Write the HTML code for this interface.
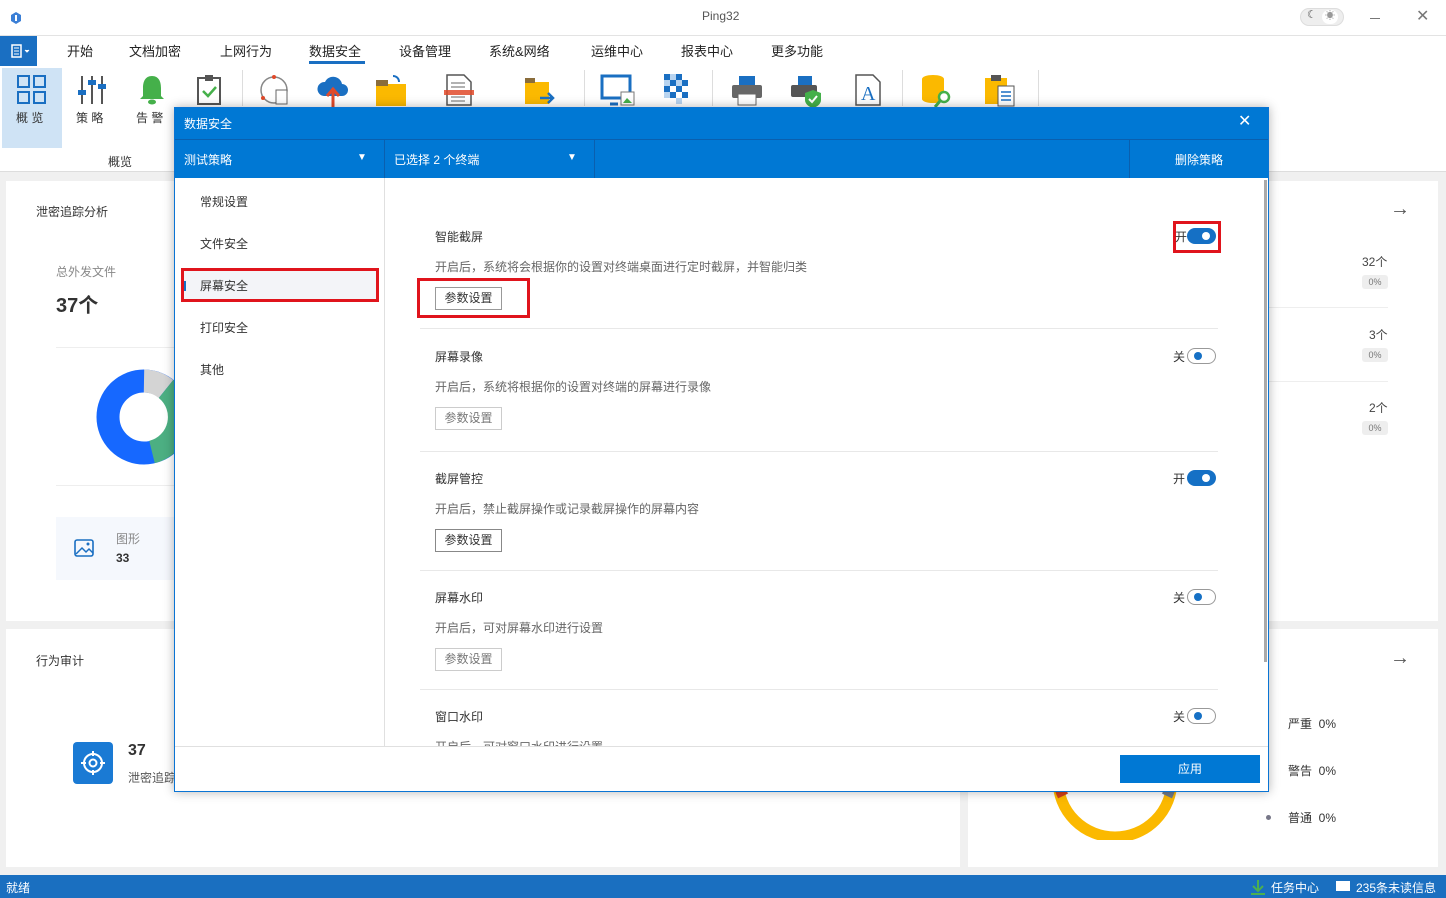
<!DOCTYPE html>
<html><head><meta charset="utf-8"><style>
*{margin:0;padding:0;box-sizing:border-box}
body{width:1446px;height:898px;position:relative;overflow:hidden;background:#f0f0f0;font-family:"Liberation Sans","Noto Sans CJK SC",sans-serif;font-size:12px;color:#333}
.a{position:absolute}
.t{position:absolute;white-space:nowrap;transform:translateY(-1px)}
.card{position:absolute;background:#fff}
.tab{position:absolute;top:41px;font-size:13px;color:#222}
.sep{position:absolute;top:70px;width:1px;height:36px;background:#ddd}
.sw{position:absolute;width:29px;height:16px;border-radius:8px}
.on{background:#1570c5}
.on:after{content:"";position:absolute;right:6px;top:4px;width:8px;height:8px;border-radius:50%;background:#fff}
.off{border:1px solid #999;background:#fff}
.off:after{content:"";position:absolute;left:6px;top:3px;width:8px;height:8px;border-radius:50%;background:#1570c5}
.btn{position:absolute;left:435px;width:67px;height:23px;border:1px solid #bbb;text-align:center;line-height:21px;font-size:12px;color:#333;background:#fff}
.hr{position:absolute;left:420px;width:798px;height:1px;background:#e8e8e8}
.nav{position:absolute;left:200px;font-size:12px;color:#333;transform:translateY(-1px)}
</style></head><body>
<div class="a" style="left:0;top:0;width:1446px;height:36px;background:#fff;border-bottom:1px solid #e3e3e3"></div>
<svg class="a" style="left:10px;top:11px" width="12" height="14"><path d="M6 1 L11 4 L11 10 L6 13 L1 10 L1 4Z" fill="#3b7fd6"/><path d="M6 4v6" stroke="#fff" stroke-width="2"/></svg>
<div class="t" style="left:702px;top:10px;font-size:12px;color:#555">Ping32</div>
<div class="a" style="left:1300px;top:8px;width:44px;height:18px;border-radius:9px;background:#eee;border:1px solid #ddd"></div>
<div class="t" style="left:1307px;top:9px;font-size:11px;color:#555">☾</div>
<div class="a" style="left:1322px;top:10px;width:16px;height:14px;background:#fff;border-radius:7px;font-size:10px;color:#999;text-align:center;line-height:14px">☀</div>
<div class="a" style="left:1370px;top:18px;width:10px;height:1px;background:#777"></div>
<div class="t" style="left:1416px;top:7px;font-size:16px;color:#777">✕</div>
<div class="a" style="left:0;top:36px;width:1446px;height:30px;background:#fff"></div>
<div class="a" style="left:0;top:36px;width:37px;height:30px;background:#1a6fc2"></div>
<svg class="a" style="left:11px;top:44px" width="20" height="14"><rect x="1" y="1" width="9" height="12" fill="none" stroke="#fff" stroke-width="1.5"/><path d="M3 4h5M3 7h5M3 10h5" stroke="#fff"/><path d="M14 6l2 2 2-2" fill="#fff" stroke="#fff"/></svg>
<div class="tab" style="left:67px">开始</div>
<div class="tab" style="left:129px">文档加密</div>
<div class="tab" style="left:220px">上网行为</div>
<div class="tab" style="left:309px">数据安全</div>
<div class="a" style="left:309px;top:61px;width:56px;height:3px;background:#1a6fc2"></div>
<div class="tab" style="left:399px">设备管理</div>
<div class="tab" style="left:489px">系统&amp;网络</div>
<div class="tab" style="left:591px">运维中心</div>
<div class="tab" style="left:681px">报表中心</div>
<div class="tab" style="left:771px">更多功能</div>
<div class="a" style="left:0;top:66px;width:1446px;height:106px;background:#fff;border-bottom:1px solid #ddd"></div>
<div class="a" style="left:2px;top:68px;width:60px;height:80px;background:#cfe3f5"></div>
<svg class="a" style="left:16px;top:74px" width="32" height="32"><g fill="none" stroke="#1a6fc2" stroke-width="2"><rect x="2" y="2" width="11" height="11"/><rect x="18" y="2" width="11" height="11"/><rect x="2" y="18" width="11" height="11"/><rect x="18" y="18" width="11" height="11"/></g></svg>
<div class="t" style="left:16px;top:110px">概 览</div>
<svg class="a" style="left:76px;top:74px" width="32" height="32"><path d="M6 2v28M16 2v28M26 2v28" stroke="#555" stroke-width="2"/><rect x="2" y="16" width="8" height="5" fill="#1a6fc2"/><rect x="12" y="6" width="8" height="5" fill="#1a6fc2"/><rect x="22" y="10" width="8" height="5" fill="#1a6fc2"/></svg>
<div class="t" style="left:76px;top:110px">策 略</div>
<svg class="a" style="left:136px;top:74px" width="32" height="32"><path d="M16 2c-7 0-9 6-9 12v8l-3 3h24l-3-3v-8c0-6-2-12-9-12z" fill="#45b04a"/><ellipse cx="16" cy="28" rx="4" ry="2.5" fill="#45b04a"/></svg>
<div class="t" style="left:136px;top:110px">告 警</div>
<svg class="a" style="left:196px;top:74px" width="28" height="32"><rect x="2" y="4" width="22" height="26" fill="none" stroke="#555" stroke-width="2"/><rect x="9" y="1" width="8" height="6" fill="#555"/><path d="M7 17l5 5 8-9" stroke="#45b04a" stroke-width="2.5" fill="none"/></svg>
<div class="sep" style="left:242px"></div>
<svg class="a" style="left:258px;top:74px" width="34" height="32"><circle cx="16" cy="16" r="13" fill="none" stroke="#888" stroke-width="1.5"/><circle cx="16" cy="3" r="2" fill="#e04a2a"/><circle cx="5" cy="24" r="2" fill="#e04a2a"/><rect x="18" y="16" width="11" height="14" fill="#fff" stroke="#666"/></svg>
<svg class="a" style="left:316px;top:74px" width="34" height="34"><path d="M8 22a7 7 0 0 1 1-14 9 9 0 0 1 17 2 6 6 0 0 1 0 12z" fill="#1a6fc2"/><path d="M17 34V16M11 22l6-7 6 7" stroke="#e04a2a" stroke-width="3" fill="none"/></svg>
<svg class="a" style="left:375px;top:74px" width="34" height="32"><rect x="1" y="10" width="30" height="22" fill="#fbb900"/><rect x="1" y="6" width="12" height="6" fill="#8a6d3b"/><path d="M24 8c0-4-3-6-6-6" stroke="#1a6fc2" stroke-width="2" fill="none"/></svg>
<svg class="a" style="left:444px;top:74px" width="30" height="32"><path d="M3 1h17l7 7v23H3z" fill="#fff" stroke="#555" stroke-width="1.5"/><path d="M7 9h14M7 13h14M7 23h14M7 27h14" stroke="#666"/><rect x="0" y="16" width="30" height="5" fill="#e04a2a" opacity=".85"/></svg>
<svg class="a" style="left:522px;top:74px" width="34" height="32"><rect x="3" y="8" width="24" height="22" fill="#fbb900"/><rect x="3" y="4" width="10" height="5" fill="#8a6d3b"/><path d="M18 24h12M26 19l5 5-5 5" stroke="#1a6fc2" stroke-width="2.5" fill="none"/></svg>
<div class="sep" style="left:584px"></div>
<svg class="a" style="left:600px;top:74px" width="36" height="32"><path d="M2 2h28v22H2z" fill="none" stroke="#1a6fc2" stroke-width="3"/><path d="M10 30h8" stroke="#1a6fc2" stroke-width="3"/><rect x="21" y="18" width="13" height="13" fill="#fff" stroke="#777"/><path d="M23 29l4-5 5 5z" fill="#45b04a"/></svg>
<svg class="a" style="left:664px;top:74px" width="28" height="30"><g fill="#1a6fc2"><rect x="0" y="0" width="6" height="6"/><rect x="12" y="0" width="6" height="6"/><rect x="6" y="6" width="6" height="6"/><rect x="18" y="6" width="6" height="6"/><rect x="0" y="12" width="6" height="6"/><rect x="12" y="12" width="6" height="6"/><rect x="6" y="18" width="6" height="6"/><rect x="18" y="18" width="6" height="6"/></g><g fill="#b8d4f0"><rect x="6" y="0" width="6" height="6"/><rect x="0" y="6" width="6" height="6"/><rect x="12" y="6" width="6" height="6"/><rect x="0" y="18" width="6" height="6"/><rect x="12" y="24" width="6" height="6"/></g></svg>
<div class="sep" style="left:712px"></div>
<svg class="a" style="left:730px;top:74px" width="34" height="32"><rect x="9" y="2" width="16" height="9" fill="#1a6fc2"/><rect x="2" y="11" width="30" height="13" rx="2" fill="#666"/><rect x="8" y="20" width="18" height="11" fill="#fff" stroke="#666"/></svg>
<svg class="a" style="left:789px;top:74px" width="36" height="34"><rect x="9" y="2" width="14" height="9" fill="#1a6fc2"/><rect x="2" y="11" width="26" height="12" rx="2" fill="#555"/><path d="M24 16l8 3v7c0 4-4 7-8 8-4-1-8-4-8-8v-7z" fill="#45b04a"/><path d="M20 25l3 3 5-6" stroke="#fff" stroke-width="2" fill="none"/></svg>
<svg class="a" style="left:854px;top:74px" width="28" height="32"><path d="M2 1h17l7 7v23H2z" fill="#fff" stroke="#555" stroke-width="1.5"/><text x="7" y="26" font-family="Liberation Serif" font-size="20" fill="#1a6fc2">A</text></svg>
<div class="sep" style="left:902px"></div>
<svg class="a" style="left:920px;top:74px" width="34" height="34"><ellipse cx="13" cy="5" rx="11" ry="4" fill="#fbb900"/><rect x="2" y="5" width="22" height="20" fill="#fbb900"/><ellipse cx="13" cy="25" rx="11" ry="4" fill="#fbb900"/><circle cx="24" cy="23" r="5" fill="#fff" stroke="#45b04a" stroke-width="2.5"/><path d="M20 27l-5 6" stroke="#45b04a" stroke-width="3"/></svg>
<svg class="a" style="left:984px;top:74px" width="34" height="34"><rect x="1" y="4" width="22" height="26" fill="#fbb900"/><rect x="7" y="1" width="10" height="6" fill="#555"/><rect x="14" y="12" width="16" height="20" fill="#fff" stroke="#555"/><path d="M17 18h10M17 22h10M17 26h10" stroke="#1a6fc2" stroke-width="1.5"/></svg>
<div class="sep" style="left:1038px"></div>
<div class="t" style="left:108px;top:154px;color:#333">概览</div>
<div class="card" style="left:6px;top:181px;width:954px;height:440px"></div>
<div class="card" style="left:968px;top:181px;width:470px;height:440px"></div>
<div class="card" style="left:6px;top:629px;width:954px;height:238px"></div>
<div class="card" style="left:968px;top:629px;width:470px;height:238px"></div>
<div class="t" style="left:36px;top:204px;color:#333">泄密追踪分析</div>
<div class="t" style="left:56px;top:264px;color:#888">总外发文件</div>
<div class="t" style="left:56px;top:290px;font-size:20px;font-weight:bold;color:#333">37个</div>
<div class="a" style="left:56px;top:347px;width:120px;height:1px;background:#eee"></div>
<div class="a" style="left:56px;top:485px;width:120px;height:1px;background:#eee"></div>
<svg class="a" style="left:96px;top:369px" width="80" height="98"><circle cx="48" cy="48" r="36" fill="none" stroke="#1668ff" stroke-width="23"/><path d="M48 12a36 36 0 0 1 22 8" fill="none" stroke="#d4d4d4" stroke-width="23"/><path d="M70 20a36 36 0 0 1 -14 63" fill="none" stroke="#4caf82" stroke-width="23"/></svg>
<div class="a" style="left:56px;top:517px;width:120px;height:63px;background:#f5f8fd"></div>
<svg class="a" style="left:74px;top:539px" width="20" height="18"><rect x="1" y="1" width="18" height="16" rx="2" fill="none" stroke="#1a6fc2" stroke-width="1.6"/><path d="M2 15l6-6 4 4 3-3 4 4" fill="none" stroke="#1a6fc2" stroke-width="1.5"/><circle cx="14" cy="5" r="1.5" fill="#1a6fc2"/></svg>
<div class="t" style="left:116px;top:531px;color:#888">图形</div>
<div class="t" style="left:116px;top:552px;font-weight:bold;color:#333">33</div>
<div class="t" style="left:36px;top:653px;color:#333">行为审计</div>
<div class="a" style="left:73px;top:742px;width:40px;height:42px;background:#1a7ad4;border-radius:4px"></div>
<svg class="a" style="left:79px;top:749px" width="28" height="28"><circle cx="14" cy="14" r="9" fill="none" stroke="#fff" stroke-width="2"/><circle cx="14" cy="14" r="3.5" fill="none" stroke="#fff" stroke-width="2"/><path d="M14 2v5M14 21v5M2 14h5M21 14h5" stroke="#fff" stroke-width="2"/></svg>
<div class="t" style="left:128px;top:743px;font-size:16px;font-weight:bold;color:#333">37</div>
<div class="t" style="left:128px;top:770px;color:#555">泄密追踪</div>
<div class="t" style="left:1390px;top:199px;font-size:20px;color:#555">→</div>
<div class="t" style="left:1362px;top:254px;color:#444">32个</div>
<div class="a" style="left:1362px;top:275px;width:26px;height:14px;background:#eee;border-radius:3px;font-size:9px;color:#777;text-align:center;line-height:14px">0%</div>
<div class="a" style="left:1268px;top:307px;width:120px;height:1px;background:#eee"></div>
<div class="t" style="left:1369px;top:327px;color:#444">3个</div>
<div class="a" style="left:1362px;top:348px;width:26px;height:14px;background:#eee;border-radius:3px;font-size:9px;color:#777;text-align:center;line-height:14px">0%</div>
<div class="a" style="left:1268px;top:381px;width:120px;height:1px;background:#eee"></div>
<div class="t" style="left:1369px;top:400px;color:#444">2个</div>
<div class="a" style="left:1362px;top:421px;width:26px;height:14px;background:#eee;border-radius:3px;font-size:9px;color:#777;text-align:center;line-height:14px">0%</div>
<div class="t" style="left:1390px;top:648px;font-size:20px;color:#555">→</div>
<div class="t" style="left:1288px;top:716px;color:#333">严重&nbsp;&nbsp;0%</div>
<div class="t" style="left:1288px;top:763px;color:#333">警告&nbsp;&nbsp;0%</div>
<div class="a" style="left:1266px;top:815px;width:5px;height:5px;border-radius:50%;background:#778"></div>
<div class="t" style="left:1288px;top:810px;color:#333">普通&nbsp;&nbsp;0%</div>
<svg class="a" style="left:1050px;top:780px" width="130" height="60"><path d="M8 0a57 57 0 0 0 114 0" fill="none" stroke="#fbb900" stroke-width="11"/><path d="M8 0a57 57 0 0 0 5 16" fill="none" stroke="#d2401a" stroke-width="11"/><path d="M122 0a57 57 0 0 1 -5 16" fill="none" stroke="#6f7a8a" stroke-width="11"/></svg>
<div class="a" style="left:0;top:875px;width:1446px;height:23px;background:#1a6fc0"></div>
<div class="t" style="left:6px;top:880px;color:#fff">就绪</div>
<svg class="a" style="left:1250px;top:879px" width="16" height="16"><path d="M8 1v11M3 7l5 5 5-5M1 15h14" stroke="#4caf50" stroke-width="2" fill="none"/></svg>
<div class="t" style="left:1271px;top:880px;color:#fff">任务中心</div>
<div class="a" style="left:1336px;top:881px;width:14px;height:10px;background:#fff"></div>
<div class="t" style="left:1356px;top:880px;color:#fff">235条未读信息</div>
<div class="a" style="left:174px;top:107px;width:1095px;height:685px;background:#fff;border:1px solid #0a74d4;box-shadow:0 0 10px rgba(0,0,0,.3)"></div>
<div class="a" style="left:175px;top:108px;width:1093px;height:31px;background:#0078d4"></div>
<div class="t" style="left:184px;top:116px;color:#fff">数据安全</div>
<div class="t" style="left:1238px;top:112px;color:#fff;font-size:16px">✕</div>
<div class="a" style="left:175px;top:139px;width:1093px;height:39px;background:#0078d4;border-top:1px solid #0a5fae"></div>
<div class="a" style="left:384px;top:140px;width:1px;height:38px;background:#0a5fae"></div>
<div class="a" style="left:594px;top:140px;width:1px;height:38px;background:#0a5fae"></div>
<div class="a" style="left:1129px;top:140px;width:1px;height:38px;background:#0a5fae"></div>
<div class="t" style="left:184px;top:152px;color:#fff">测试策略</div>
<div class="t" style="left:357px;top:153px;color:#fff;font-size:10px">▼</div>
<div class="t" style="left:394px;top:152px;color:#fff">已选择 2 个终端</div>
<div class="t" style="left:567px;top:153px;color:#fff;font-size:10px">▼</div>
<div class="t" style="left:1175px;top:152px;color:#fff">删除策略</div>
<div class="a" style="left:384px;top:178px;width:1px;height:568px;background:#e0e0e0"></div>
<div class="a" style="left:175px;top:746px;width:1093px;height:1px;background:#e0e0e0"></div>
<div class="nav" style="top:194px">常规设置</div>
<div class="nav" style="top:236px">文件安全</div>
<div class="a" style="left:181px;top:268px;width:198px;height:34px;background:#f3f4f8;border:3px solid #e0141c"></div>
<div class="a" style="left:184px;top:281px;width:2px;height:10px;background:#1570c5"></div>
<div class="nav" style="top:278px">屏幕安全</div>
<div class="nav" style="top:320px">打印安全</div>
<div class="nav" style="top:362px">其他</div>
<div class="a" style="left:1264px;top:180px;width:3px;height:482px;background:#aaa"></div>
<div class="t" style="left:435px;top:229px">智能截屏</div>
<div class="t" style="left:435px;top:259px;color:#666">开启后，系统将会根据你的设置对终端桌面进行定时截屏，并智能归类</div>
<div class="btn" style="top:287px;border-color:#999">参数设置</div>
<div class="a" style="left:417px;top:278px;width:113px;height:40px;border:3px solid #e0141c"></div>
<div class="a" style="left:1173px;top:221px;width:48px;height:32px;border:3px solid #e0141c"></div>
<div class="t" style="left:1175px;top:229px">开</div>
<div class="sw on" style="left:1187px;top:228px"></div>
<div class="hr" style="top:328px"></div>
<div class="t" style="left:435px;top:349px">屏幕录像</div>
<div class="t" style="left:435px;top:379px;color:#666">开启后，系统将根据你的设置对终端的屏幕进行录像</div>
<div class="btn" style="top:407px;color:#777;border-color:#ccc">参数设置</div>
<div class="t" style="left:1173px;top:349px">关</div>
<div class="sw off" style="left:1187px;top:348px"></div>
<div class="hr" style="top:451px"></div>
<div class="t" style="left:435px;top:471px">截屏管控</div>
<div class="t" style="left:435px;top:501px;color:#666">开启后，禁止截屏操作或记录截屏操作的屏幕内容</div>
<div class="btn" style="top:529px;border-color:#888">参数设置</div>
<div class="t" style="left:1173px;top:471px">开</div>
<div class="sw on" style="left:1187px;top:470px"></div>
<div class="hr" style="top:570px"></div>
<div class="t" style="left:435px;top:590px">屏幕水印</div>
<div class="t" style="left:435px;top:620px;color:#666">开启后，可对屏幕水印进行设置</div>
<div class="btn" style="top:648px;color:#777;border-color:#ccc">参数设置</div>
<div class="t" style="left:1173px;top:590px">关</div>
<div class="sw off" style="left:1187px;top:589px"></div>
<div class="hr" style="top:689px"></div>
<div class="t" style="left:435px;top:709px">窗口水印</div>
<div class="t" style="left:1173px;top:709px">关</div>
<div class="sw off" style="left:1187px;top:708px"></div>
<div class="a" style="left:435px;top:737px;width:200px;height:9px;overflow:hidden"><div class="t" style="left:0;top:2px;color:#666">开启后，可对窗口水印进行设置</div></div>
<div class="a" style="left:1120px;top:755px;width:140px;height:28px;background:#0078d4;color:#fff;text-align:center;line-height:28px">应用</div>
</body></html>
